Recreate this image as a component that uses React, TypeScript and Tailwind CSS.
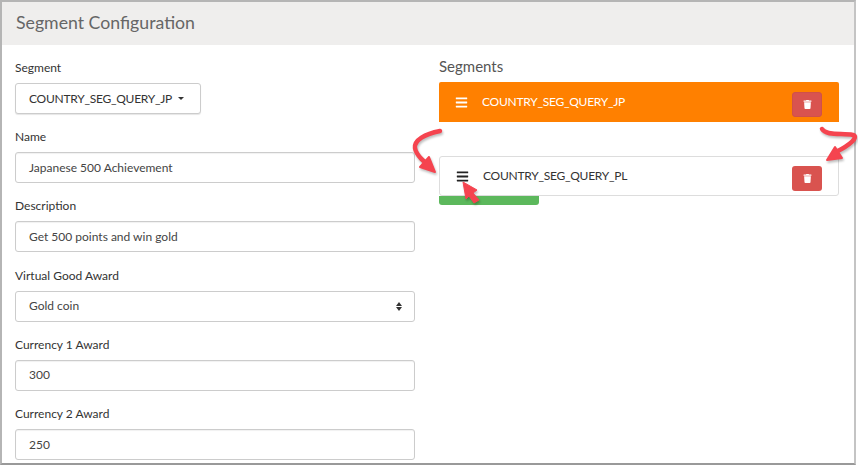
import { FaBars, FaTrash } from 'react-icons/fa';

const fields = [
  { label: 'Name', value: 'Japanese 500 Achievement' },
  { label: 'Description', value: 'Get 500 points and win gold' },
];

const currencies = [
  { label: 'Currency 1 Award', value: '300' },
  { label: 'Currency 2 Award', value: '250' },
];

function FieldLabel({ children }: { children: React.ReactNode }) {
  return <div className="h-5 mb-[5px] text-[12px] leading-5 text-[#333]">{children}</div>;
}

function TextField({ label, value }: { label: string; value: string }) {
  return (
    <div className="mb-[13.25px]">
      <FieldLabel>{label}</FieldLabel>
      <div className="h-[31px] px-[13px] flex items-center border border-[#ccc] rounded-[3px] bg-white text-[12px] text-[#444] shadow-[inset_0_1px_1px_rgba(0,0,0,0.06)]">
        {value}
      </div>
    </div>
  );
}

function TrashButton({ muted }: { muted?: boolean }) {
  return (
    <div className={`w-[30px] h-[25px] mt-[5px] flex items-center justify-center rounded-[3px] text-white text-[9px] ${muted ? 'bg-[#d9534f] border border-[#d0504a]' : 'bg-[#d9534f]'}`}>
      <FaTrash />
    </div>
  );
}

export default function App() {
  return (
    <div className="relative w-[858px] h-[466px] overflow-hidden bg-white font-['Lato',sans-serif]">
      <div className="w-[856px] h-[465px] border-2 border-[#b5b5b5] border-r-[#c4c4c4] border-b-[#999]">
        <div className="h-[43px] px-[14px] flex items-center bg-[#efeeed] text-[17.7px] text-[#666]">
          Segment Configuration
        </div>
        <div className="flex gap-6 pl-[13px] pt-[13px]">
          <div className="w-[400px]">
            <div className="mb-[13px]">
              <FieldLabel>Segment</FieldLabel>
              <div className="w-[186px] h-[31px] pl-[13px] flex items-center gap-[6px] border border-[#ccc] rounded-[3px] bg-white text-[12px] tracking-[-0.25px] text-[#333] shadow-[0_1px_1px_rgba(0,0,0,0.1)]">
                COUNTRY_SEG_QUERY_JP
                <span className="border-x-[3px] border-t-[3px] border-x-transparent border-t-[#333]" />
              </div>
            </div>
            {fields.map((f) => (
              <TextField key={f.label} label={f.label} value={f.value} />
            ))}
            <div className="mb-[13.25px]">
              <FieldLabel>Virtual Good Award</FieldLabel>
              <div className="h-[31px] pl-[13px] pr-[12px] flex items-center justify-between border border-[#ccc] rounded-[3px] bg-white text-[12px] text-[#444]">
                Gold coin
                <span className="flex flex-col gap-[1px]">
                  <span className="border-x-[3px] border-b-[4px] border-x-transparent border-b-[#333]" />
                  <span className="border-x-[3px] border-t-[4px] border-x-transparent border-t-[#333]" />
                </span>
              </div>
            </div>
            {currencies.map((f) => (
              <TextField key={f.label} label={f.label} value={f.value} />
            ))}
          </div>
          <div className="w-[400px]">
            <div className="h-[22px] mb-[5px] -mt-[3px] text-[15px] leading-[22px] text-[#555]">Segments</div>
            <div className="h-10 pl-[16px] pr-[17px] flex items-center rounded-t-[2px] bg-[#ff8000] text-white text-[12px] tracking-[-0.25px]">
              <FaBars className="text-[13px]" />
              <span className="ml-[14px] flex-1">COUNTRY_SEG_QUERY_JP</span>
              <TrashButton muted />
            </div>
            <div className="mt-[34px] h-10 pl-[16px] pr-[16px] flex items-center border border-[#ddd] rounded-[3px] bg-white text-[#333] text-[12px] tracking-[-0.25px]">
              <FaBars className="text-[13px] text-[#222]" />
              <span className="ml-[14px] flex-1">COUNTRY_SEG_QUERY_PL</span>
              <TrashButton />
            </div>
            <div className="w-[100px] h-[9px] rounded-b-[3px] bg-[#5cb85c]" />
          </div>
        </div>
      </div>

      {/* red annotation arrows drawn over the screenshot */}
      <svg className="absolute left-0 top-0 pointer-events-none drop-shadow-[1px_2px_1px_rgba(0,0,0,0.25)]" width="858" height="466" fill="none">
        <path d="M440 131C425 134 414 140 415 148C416 155 425 163 431 167" stroke="#f5444f" strokeWidth="4.5" strokeLinecap="round" />
        <path d="M420 167L435 172L429 157Z" fill="#f5444f" stroke="#f5444f" strokeWidth="2" strokeLinejoin="round" />
        <path d="M822 129C826 136 842 133 853 135C859 137 850 145 836 152" stroke="#f5444f" strokeWidth="4.5" strokeLinecap="round" />
        <path d="M827 160L842 158L835 147Z" fill="#f5444f" stroke="#f5444f" strokeWidth="2" strokeLinejoin="round" />
        <path d="M463 182L477 190L473 193L479 200L474 203L469 196L466 199Z" fill="#f5444f" stroke="#f5444f" strokeLinejoin="round" />
      </svg>
    </div>
  );
}
